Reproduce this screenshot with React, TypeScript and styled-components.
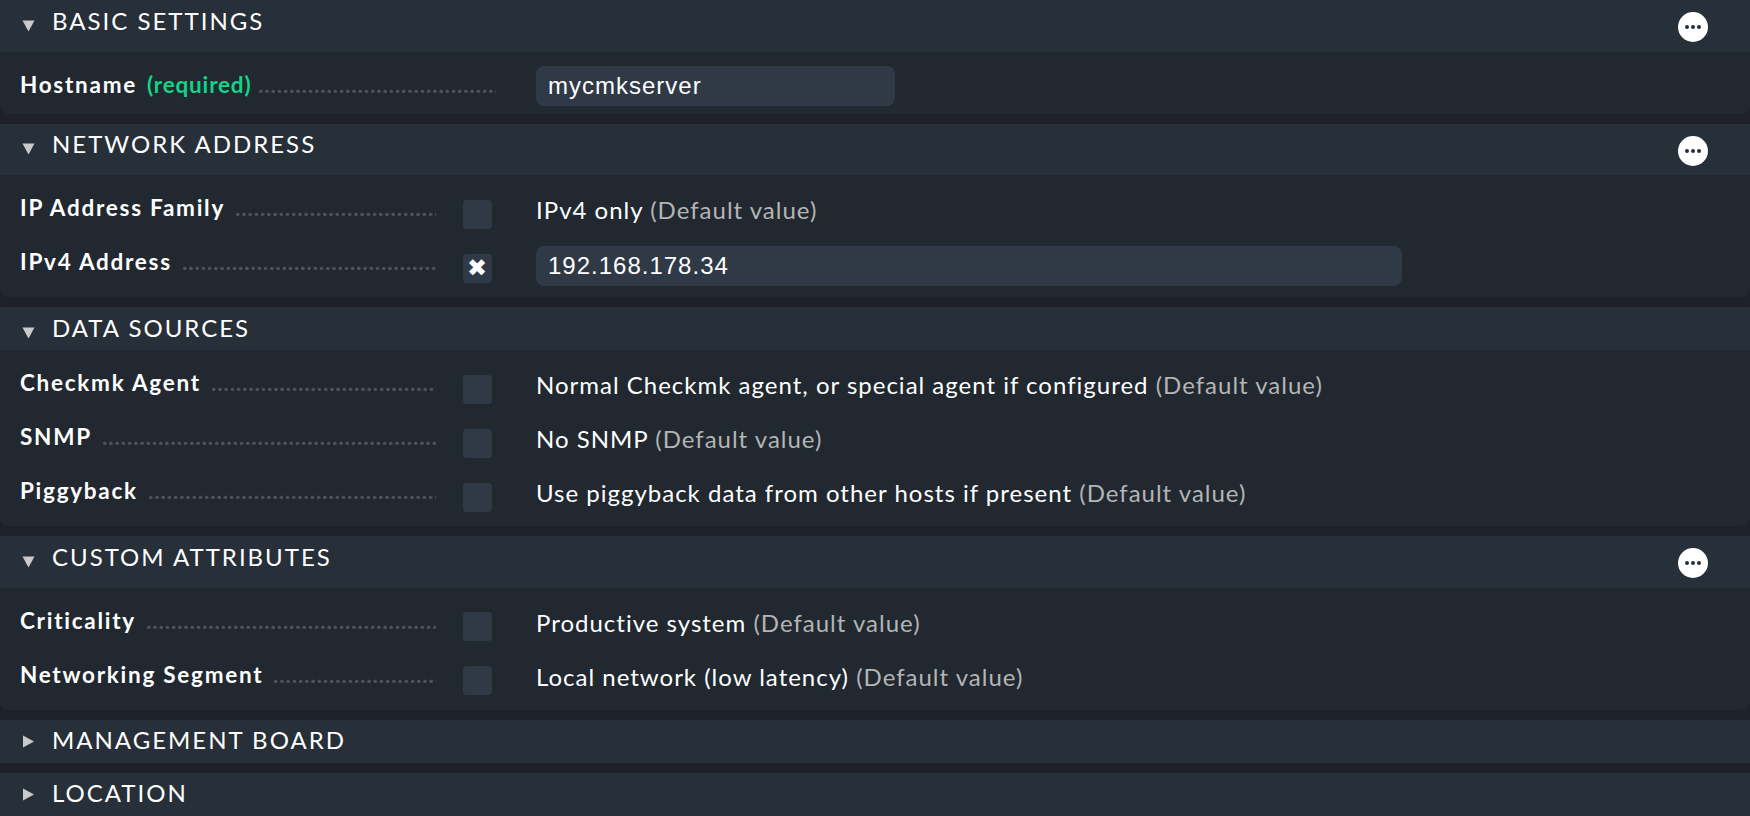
import React from "react";
import styled, { createGlobalStyle } from "styled-components";

const GlobalStyle = createGlobalStyle`
  * { box-sizing: border-box; }
  body {
    margin: 0;
    background: #1e2129;
    color: #ffffff;
    font-family: Lato, "Liberation Sans", sans-serif;
    font-size: 24px;
  }
`;

const Page = styled.main`
  display: flex;
  flex-direction: column;
  gap: 10px;
  width: 1750px;
  height: 816px;
  overflow: hidden;
`;

const Section = styled.section`
  display: flex;
  flex-direction: column;
  flex: none;
`;

const SectionHeader = styled.header<{ $height: number }>`
  display: flex;
  align-items: flex-start;
  height: ${(p) => p.$height}px;
  padding: 0 42px 0 22px;
  background: #272f38;
`;

const Arrow = styled.svg<{ $top: number }>`
  flex: none;
  width: 13px;
  height: 13px;
  margin-top: ${(p) => p.$top}px;
  fill: #c9cacb;
`;

const SectionTitle = styled.h2<{ $top: number }>`
  flex: 1;
  margin: ${(p) => p.$top}px 0 0 17px;
  font-size: 24px;
  font-weight: 400;
  line-height: 30px;
  letter-spacing: 2px;
  text-transform: uppercase;
`;

const MoreButton = styled.button`
  flex: none;
  display: flex;
  align-items: center;
  justify-content: center;
  gap: 2px;
  width: 30px;
  height: 30px;
  margin-top: 12px;
  padding: 0;
  border: 0;
  border-radius: 50%;
  background: #ffffff;
`;

const MoreDot = styled.span`
  width: 4px;
  height: 4px;
  border-radius: 50%;
  background: #272f38;
`;

const SectionBody = styled.div`
  padding: 7px 0 7px 20px;
  border-radius: 0 0 8px 8px;
  background: #21282f;
`;

const Row = styled.div<{ $compact?: boolean }>`
  display: flex;
  align-items: flex-start;
  height: ${(p) => (p.$compact ? 48 : 54)}px;
`;

const Legend = styled.div<{ $wide?: boolean }>`
  display: flex;
  width: ${(p) => (p.$wide ? 476 : 416)}px;
  padding-top: 9px;
  line-height: 33px;
  white-space: nowrap;
`;

const Label = styled.span`
  flex: none;
  font-weight: 700;
  font-size: 22.5px;
  letter-spacing: 1.73px;
`;

const Required = styled.span`
  flex: none;
  margin-left: 10px;
  color: #13d389;
  font-weight: 700;
  font-size: 22.5px;
  letter-spacing: 0.8px;
`;

const Leader = styled.span<{ $gap: number }>`
  flex: 1;
  height: 5px;
  margin: 21px 0 0 ${(p) => p.$gap}px;
  background: radial-gradient(circle at 1.75px 2.4px, #4f5457 1.3px, transparent 2.1px) 0 0 / 6.22px 5px repeat-x;
`;

const CheckSlot = styled.div<{ $empty?: boolean; $top?: number }>`
  width: ${(p) => (p.$empty ? 40 : 100)}px;
  padding: ${(p) => p.$top ?? 18}px 0 0 27px;
`;

const Checkbox = styled.span`
  display: flex;
  align-items: center;
  justify-content: center;
  width: 29px;
  height: 29px;
  padding-right: 1px;
  border-radius: 4px;
  background: #303946;
  font-family: "DejaVu Sans", sans-serif;
  font-size: 24px;
  line-height: 29px;
`;

const Value = styled.div`
  padding-top: 12px;
  line-height: 32px;
  letter-spacing: 1px;
  white-space: nowrap;
`;

const Muted = styled.span`
  color: #b3b5b6;
`;

const TextInput = styled.input<{ $width: number; $top: number }>`
  width: ${(p) => p.$width}px;
  height: 40px;
  margin: ${(p) => p.$top}px 0 0;
  padding: 0 12px;
  border: 0;
  border-radius: 8px;
  outline: 0;
  background: #303946;
  color: #ffffff;
  font-family: "Liberation Sans", Arial, sans-serif;
  font-size: 24px;
  letter-spacing: 1px;
`;

type Field = {
  label: string;
  required?: boolean;
  value?: string;
  input?: string;
  inputWidth?: number;
};

type SectionData = {
  title: string;
  height: number;
  titleTop: number;
  arrowTop: number;
  checkTop?: number;
  more?: boolean;
  open?: boolean;
  fields?: Field[];
};

const sections: SectionData[] = [
  {
    title: "Basic settings", height: 52, titleTop: 6, arrowTop: 19, more: true, open: true,
    fields: [{ label: "Hostname", required: true, input: "mycmkserver", inputWidth: 359 }],
  },
  {
    title: "Network address", height: 51, titleTop: 5, arrowTop: 18, more: true, open: true,
    fields: [
      { label: "IP Address Family", value: "IPv4 only" },
      { label: "IPv4 Address", input: "192.168.178.34", inputWidth: 866 },
    ],
  },
  {
    title: "Data sources", height: 43, titleTop: 6, arrowTop: 19, open: true,
    fields: [
      { label: "Checkmk Agent", value: "Normal Checkmk agent, or special agent if configured" },
      { label: "SNMP", value: "No SNMP" },
      { label: "Piggyback", value: "Use piggyback data from other hosts if present" },
    ],
  },
  {
    title: "Custom attributes", height: 52, titleTop: 6, arrowTop: 19, more: true, open: true, checkTop: 17,
    fields: [
      { label: "Criticality", value: "Productive system" },
      { label: "Networking Segment", value: "Local network (low latency)" },
    ],
  },
  { title: "Management board", height: 43, titleTop: 5, arrowTop: 15 },
  { title: "Location", height: 43, titleTop: 5, arrowTop: 15 },
];

function FieldRow({ field, checkTop }: { field: Field; checkTop?: number }) {
  return (
    <Row $compact={field.required}>
      <Legend $wide={field.required}>
        <Label>{field.label}</Label>
        {field.required && <Required>(required)</Required>}
        <Leader $gap={field.required ? 8 : 10.8} />
      </Legend>
      <CheckSlot $empty={field.required} $top={checkTop}>
        {!field.required && <Checkbox>{field.input && "✖"}</Checkbox>}
      </CheckSlot>
      {field.input ? (
        <TextInput
          $width={field.inputWidth ?? 359}
          $top={field.required ? 7 : 10}
          defaultValue={field.input}
          aria-label={field.label}
          spellCheck={false}
        />
      ) : (
        <Value>
          {field.value} <Muted>(Default value)</Muted>
        </Value>
      )}
    </Row>
  );
}

export default function App() {
  return (
    <>
      <GlobalStyle />
      <Page>
        {sections.map((s) => (
          <Section key={s.title}>
            <SectionHeader $height={s.height}>
              <Arrow $top={s.arrowTop} viewBox="0 0 13 13">
                <path d={s.open ? "M0.5 1.5H12.5L6.5 12.5Z" : "M1 0.5V12.5L12 6.5Z"} />
              </Arrow>
              <SectionTitle $top={s.titleTop}>{s.title}</SectionTitle>
              {s.more && (
                <MoreButton aria-label="Show more">
                  <MoreDot />
                  <MoreDot />
                  <MoreDot />
                </MoreButton>
              )}
            </SectionHeader>
            {s.fields && (
              <SectionBody>
                {s.fields.map((f) => (
                  <FieldRow key={f.label} field={f} checkTop={s.checkTop} />
                ))}
              </SectionBody>
            )}
          </Section>
        ))}
      </Page>
    </>
  );
}
